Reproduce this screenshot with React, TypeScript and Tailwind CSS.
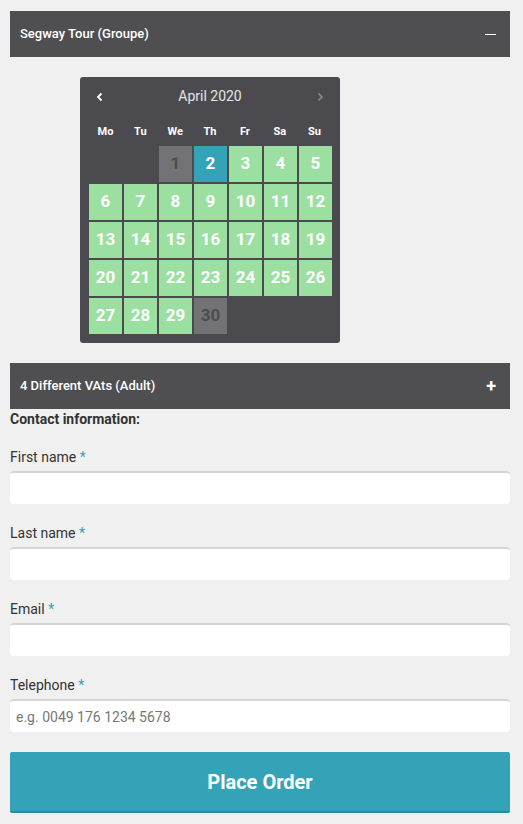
import { useState } from "react";

const days: { d: number; kind: "off" | "sel" | "ok" }[] = Array.from({ length: 30 }, (_, i) => {
  const d = i + 1;
  if (d === 1 || d === 30) return { d, kind: "off" };
  if (d === 2) return { d, kind: "sel" };
  return { d, kind: "ok" };
});

function Field({ label, placeholder, first }: { label: string; placeholder?: string; first?: boolean }) {
  return (
    <div className={first ? "mt-[18px]" : "mt-[19px]"}>
      <label className="block h-5 text-[14px] leading-5 text-[#333]">
        {label} <span className="text-[#34a3b8]">*</span>
      </label>
      <input
        placeholder={placeholder}
        className="mt-1 block h-[33px] w-full rounded-[4px] border-t-2 border-[#d4d4d4] bg-white px-[6px] text-[14px] text-[#333] placeholder:text-[#777] outline-none"
      />
    </div>
  );
}

export default function App() {
  const [open, setOpen] = useState(true);

  return (
    <div className="min-h-[824px] bg-[#f0f0f0] pl-[10px] pr-[13px] pt-[11px] font-['Roboto',sans-serif]">
      {/* first accordion */}
      <div
        className="flex h-[46px] items-center justify-between bg-[#4f4f51] pl-[10px] pr-[14px] text-white cursor-pointer"
        onClick={() => setOpen(!open)}
      >
        <span className="text-[13px] font-medium">Segway Tour (Groupe)</span>
        <span className="block h-px w-[11px] bg-white" />
      </div>

      {open && (
        <div className="pl-[70px] pt-5 pb-5">
          <div className="w-[260px] rounded-[3px] bg-[#4b4b4f] px-[9px] pb-[9px] text-white">
            <div className="flex h-[35px] items-center justify-between px-[7px] pt-1">
              <svg width="8" height="10" viewBox="0 0 8 10">
                <path d="M5.5 1.5 L2 5 L5.5 8.5" stroke="white" strokeWidth="1.8" fill="none" />
              </svg>
              <span className="text-[14px] text-[#e4e4e4]">April 2020</span>
              <svg width="8" height="10" viewBox="0 0 8 10">
                <path d="M2.5 1.5 L6 5 L2.5 8.5" stroke="#8a8a8e" strokeWidth="1.6" fill="none" />
              </svg>
            </div>
            <div className="grid grid-cols-7 gap-x-[2px] pt-[10px] pb-[4px]">
              {["Mo", "Tu", "We", "Th", "Fr", "Sa", "Su"].map((w) => (
                <div key={w} className="text-center text-[11px] font-bold leading-[20px]">
                  {w}
                </div>
              ))}
            </div>
            <div className="grid grid-cols-[repeat(7,33px)] gap-x-[2px] gap-y-[2px] auto-rows-[36px]">
              <div />
              <div />
              {days.map((x) => (
                <div
                  key={x.d}
                  className={
                    "flex items-center justify-center text-[17px] font-bold " +
                    (x.kind === "off"
                      ? "bg-[#737375] text-[#4d4d4f]"
                      : x.kind === "sel"
                      ? "bg-[#34a3b8] text-white"
                      : "bg-[#9be0a0] text-white")
                  }
                >
                  {x.d}
                </div>
              ))}
            </div>
          </div>
        </div>
      )}

      {/* second accordion */}
      <div className="flex h-[46px] items-center justify-between bg-[#4f4f51] pl-[10px] pr-[14px] text-white">
        <span className="text-[13px] font-medium">4 Different VAts (Adult)</span>
        <span className="text-[18px] font-bold leading-none">+</span>
      </div>

      <div className="h-5 text-[14px] font-bold leading-5 text-[#333]">Contact information:</div>

      <Field label="First name" first />
      <Field label="Last name" />
      <Field label="Email" />
      <Field label="Telephone" placeholder="e.g. 0049 176 1234 5678" />

      <button className="mt-5 block h-[61px] w-full rounded-[2px] border-b-2 border-[#2a8a9c] bg-[#34a3b8] text-[20px] font-bold text-white">
        Place Order
      </button>
    </div>
  );
}
